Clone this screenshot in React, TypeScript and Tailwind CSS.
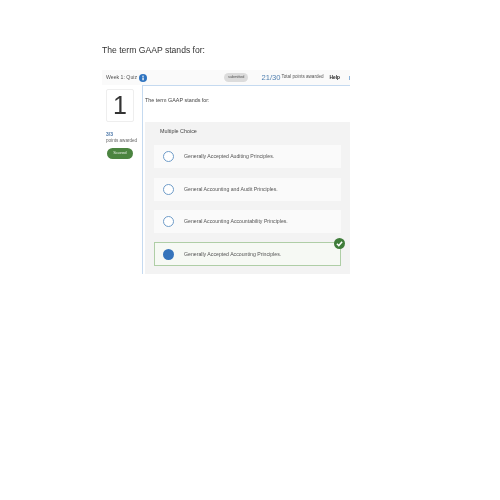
import React from "react";

const options = [
  "Generally Accepted Auditing Principles.",
  "General Accounting and Audit Principles.",
  "General Accounting Accountability Principles.",
];

function InfoIcon() {
  return (
    <svg width="8" height="8" viewBox="0 0 16 16" className="shrink-0 block">
      <circle cx="8" cy="8" r="8" fill="#2f74c0" />
      <rect x="6.8" y="7" width="2.6" height="5.5" fill="#fff" />
      <circle cx="8" cy="4.6" r="1.5" fill="#fff" />
    </svg>
  );
}

function CheckBadge() {
  return (
    <svg width="11" height="11" viewBox="0 0 16 16" className="absolute -right-[5px] -top-[5px]">
      <circle cx="8" cy="8" r="8" fill="#3f7d3a" />
      <path d="M4.2 8.3 L7 11 L11.8 5.6" fill="none" stroke="#fff" strokeWidth="2.2" />
    </svg>
  );
}

export default function App() {
  return (
    <div className="w-[500px] h-[500px] bg-white pt-[44px] pl-[102px] font-['Liberation_Sans',Arial,sans-serif] blur-[0.35px]">
      <h1 className="text-[8.6px] leading-[13px] font-normal text-[#333]">The term GAAP stands for:</h1>
      <div className="mt-[13px] w-[248px] overflow-hidden">
        <div className="h-[15px] bg-[#fafafa] flex items-center pl-[4px] whitespace-nowrap">
          <span className="text-[5.2px] text-[#555]">Week 1: Quiz</span>
          <span className="ml-[2px]"><InfoIcon /></span>
          <span className="ml-[77px] h-[9px] w-[25px] rounded-full bg-[#dcdcdc] flex items-center justify-center text-[3.8px] text-[#555]">
            submitted
          </span>
          <span className="ml-[13px] text-[7.6px] text-[#4f7faf]">21/30</span>
          <span className="ml-[1px] text-[4.6px] text-[#555]">Total points awarded</span>
          <span className="ml-[6px] text-[4.8px] font-bold text-[#222]">Help</span>
          <span className="ml-[9px] w-[1px] h-[4px] bg-[#8db3d9]" />
        </div>
        <div className="flex">
          <div className="w-[40px] shrink-0 pt-[4px] pl-[4px]">
            <div className="w-[28px] h-[33px] border border-[#eeeeee] rounded-[2px] flex items-center justify-center text-[25px] leading-none text-[#333]">
              1
            </div>
            <div className="mt-[9px] text-[5px] leading-[7px] font-bold text-[#4a76a8]">3/3</div>
            <div className="text-[4.6px] leading-[6px] text-[#666]">points awarded</div>
            <div className="mt-[4px] ml-[1px] w-[26px] h-[11px] rounded-full bg-[#4b8440] flex items-center justify-center text-[4.2px] text-[#e8f0e6]">
              Scored
            </div>
          </div>
          <div className="flex-1 border-l border-t border-[#c5daf0] pl-[2px] h-[189px]">
            <div className="h-[36px] pt-[11px] text-[5.4px] leading-[7px] text-[#444]">
              The term GAAP stands for:
            </div>
            <div className="h-[152px] bg-[#f3f3f3]">
              <div className="h-[17px] pt-[1px] flex items-center pl-[15px] text-[5.4px] text-[#444]">Multiple Choice</div>
              <div className="pt-[6px] pl-[9px] pr-[9px] flex flex-col gap-[9px]">
                {options.map((o, i) => (
                  <div key={o} className={i === 0 ? "h-[23px] mb-[1px] bg-[#fafafa] flex items-center pl-[9px]" : "h-[23px] bg-[#fafafa] flex items-center pl-[9px]"}>
                    <span className="w-[11px] h-[11px] rounded-full border border-[#6f9cc9] bg-white shrink-0" />
                    <span className="ml-[5px] pl-[5px] pt-[1px] text-[5.2px] text-[#555]">{o}</span>
                  </div>
                ))}
                <div className="relative h-[24px] bg-[#f6f9f4] border border-[#afcea6] flex items-center pl-[8px]">
                  <span className="w-[11px] h-[11px] rounded-full bg-[#3574bb] shrink-0" />
                  <span className="ml-[5px] pl-[5px] pt-[1px] text-[5.2px] text-[#555]">Generally Accepted Accounting Principles.</span>
                  <CheckBadge />
                </div>
              </div>
            </div>
          </div>
        </div>
      </div>
    </div>
  );
}
